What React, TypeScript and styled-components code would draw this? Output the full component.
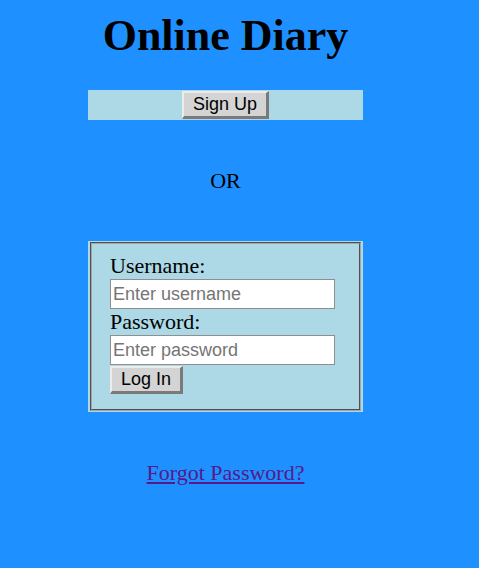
import styled, { createGlobalStyle } from 'styled-components';

const GlobalStyle = createGlobalStyle`
  html, body {
    margin: 0;
    background-color: #1e90ff;
  }
  body {
    padding: 8px;
    font-family: "Liberation Serif", "Times New Roman", serif;
    font-size: 22px;
    color: #000;
  }
`;

export default function App() {
  return (
    <>
      <GlobalStyle />
      <StyledPage>
        <StyledTitle>Online Diary</StyledTitle>
        <StyledSignUpBar>
          <StyledButton type="button">Sign Up</StyledButton>
        </StyledSignUpBar>
        <StyledOr>OR</StyledOr>
        <StyledLoginPanel>
          <StyledFieldset>
            <StyledLabel htmlFor="username">Username:</StyledLabel>
            <StyledInput id="username" type="text" placeholder="Enter username" />
            <StyledLabel htmlFor="password">Password:</StyledLabel>
            <StyledInput id="password" type="password" placeholder="Enter password" />
            <StyledButton type="submit" $gap={1}>Log In</StyledButton>
          </StyledFieldset>
        </StyledLoginPanel>
        <StyledForgot>
          <StyledLink href="#">Forgot Password?</StyledLink>
        </StyledForgot>
      </StyledPage>
    </>
  );
}

const StyledPage = styled.div`
  width: 275px;
  margin-left: 80px;
  display: flex;
  flex-direction: column;
`;

const StyledTitle = styled.h1`
  margin: 2px 0 0;
  font-size: 44px;
  font-weight: bold;
  text-align: center;
  white-space: nowrap;
`;

const StyledSignUpBar = styled.div`
  margin-top: 29px;
  padding: 1px 0;
  background-color: #add8e6;
  display: flex;
  justify-content: center;
`;

const StyledButton = styled.button<{ $gap?: number }>`
  align-self: flex-start;
  margin-top: ${({ $gap }) => $gap ?? 0}px;
  font-family: "Liberation Sans", Arial, sans-serif;
  font-size: 18px;
  line-height: 21px;
  color: #000;
  padding: 1px 9px 1px 9px;
  background-color: #d4d4d4;
  border-style: solid;
  border-width: 2px 3px 3px 2px;
  border-color: #ececec #7a7a7a #7a7a7a #ececec;
  border-radius: 0;
  cursor: pointer;
`;

const StyledOr = styled.p`
  margin: 48px 0 0;
  text-align: center;
`;

const StyledLoginPanel = styled.form`
  margin-top: 47px;
  padding: 1px 2px 1px;
  background-color: #add8e6;
`;

const StyledFieldset = styled.fieldset`
  margin: 0;
  padding: 9px 18px 15px;
  border: 2px groove #a4a4a4;
  display: flex;
  flex-direction: column;
  align-items: flex-start;
`;

const StyledLabel = styled.label`
  line-height: 26px;
`;

const StyledInput = styled.input`
  box-sizing: border-box;
  width: 225px;
  height: 30px;
  margin: 0;
  padding: 1px 2px;
  font-family: "Liberation Sans", Arial, sans-serif;
  font-size: 18px;
  border: 1px solid #8f8f8f;
  background-color: #fff;
  &::placeholder {
    color: #757575;
  }
`;

const StyledForgot = styled.p`
  margin: 48px 0 0;
  text-align: center;
`;

const StyledLink = styled.a`
  color: #551a8b;
  text-decoration: underline;
`;
